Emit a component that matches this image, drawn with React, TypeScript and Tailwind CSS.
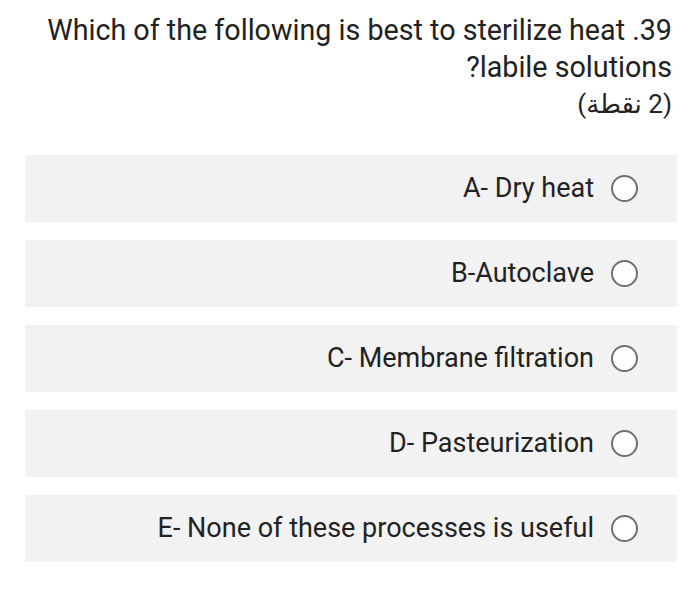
import React from "react";

const options = [
  "A- Dry heat",
  "B-Autoclave",
  "C- Membrane filtration",
  "D- Pasteurization",
  "E- None of these processes is useful",
];

function Radio() {
  return (
    <div className="w-[27px] h-[27px] rounded-full border-[2px] border-[#6f6f6f] bg-white shrink-0" />
  );
}

export default function App() {
  return (
    <div
      className="w-[700px] h-[592px] bg-white text-[#222222] overflow-hidden"
      style={{ fontFamily: "Roboto, 'DejaVu Sans', sans-serif" }}
    >
      <div className="pt-[12px] pr-[28px] flex flex-col items-end text-[28.7px] leading-[37px]">
        <div>Which of the following is best to sterilize heat .39</div>
        <div>?labile solutions</div>
        <div dir="rtl" className="text-[26px]">(2 نقطة)</div>
      </div>
      <div className="mt-[32px] ml-[25px] mr-[23px] flex flex-col gap-[18px]">
        {options.map((o) => (
          <div
            key={o}
            className="h-[67px] bg-[#f2f2f2] flex items-center justify-end gap-[17px] pr-[39px] text-[27px]"
          >
            <span>{o}</span>
            <Radio />
          </div>
        ))}
      </div>
    </div>
  );
}
